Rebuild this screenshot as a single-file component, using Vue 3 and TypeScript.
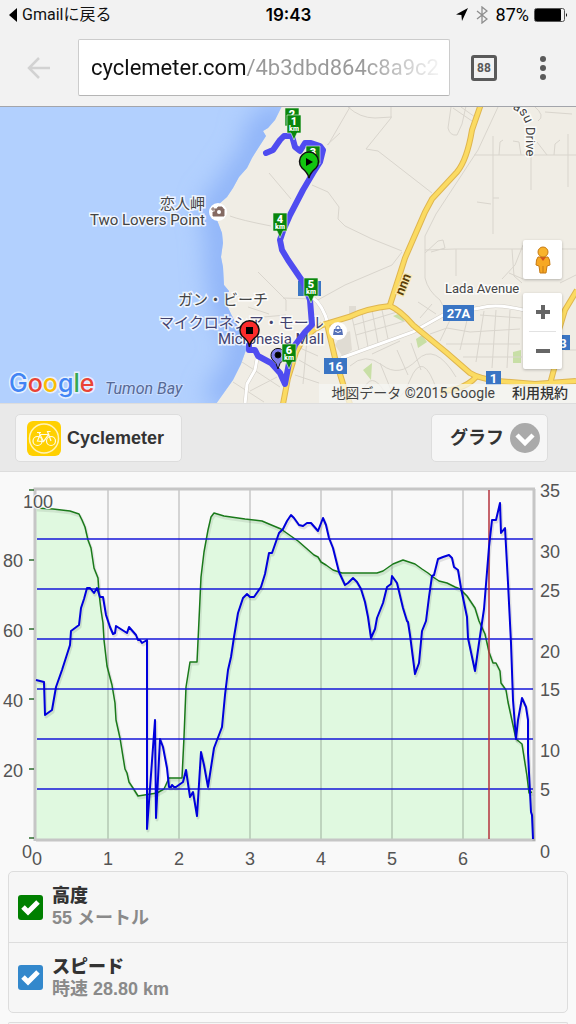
<script setup lang="ts">
import { ref } from 'vue'

interface Marker { n: string; x: number; y: number }
interface Shield { label: string; x: number; y: number; w: number; h: number }
interface Tick { label: string; at: number }
interface Series { id: string; name: string; value: string; color: string; on: boolean }

const url = ref('cyclemeter.com/4b3dbd864c8a9c2')
const view = ref('graph')

const backMarkers: Marker[] = [
  { n: '2', x: 292, y: 134 },
  { n: '1', x: 294, y: 141 },
  { n: '3', x: 313, y: 172 },
  { n: '4', x: 280, y: 239 },
  { n: '5', x: 311, y: 304 },
  { n: '6', x: 289, y: 370 },
]

const shields: Shield[] = [
  { label: '27A', x: 443, y: 305, w: 31, h: 16 },
  { label: '16', x: 324, y: 358, w: 23, h: 16 },
  { label: '1', x: 486, y: 371, w: 15, h: 14 },
  { label: '3', x: 556, y: 335, w: 14, h: 15 },
  { label: '', x: 298, y: 281, w: 23, h: 15 },
]

const greyRoads: string[] = [
  'M350 107 L328 145',
  'M327 145 L340 133 M348 107 Q360 118 375 118 L392 117',
  'M391 106 L391 118 L366 149 L378 151 L432 193',
  'M312 185 L328 192 L339 207 L338 219 L345 226 L372 239 L402 251',
  'M451 107 L448 128 Q450 136 457 135 L462 124 L466 106',
  'M453 108 L472 121 M461 107 L475 117',
  'M498 107 L478 150 L436 214 L425 236 L425 278 Q428 291 440 300 L444 308',
  'M474 155 L576 155 M493 136 L493 234 M531 155 L531 190 M568 134 L568 187',
  'M499 155 L500 142 L503 140 M513 141 L519 142 L521 155 M554 155 L555 144 L560 140 M537 142 L547 155',
  'M477 202 L491 204 M493 198 L499 198 M534 106 Q546 116 538 121 M545 112 L572 114',
  'M425 253 L438 241 L443 240 L445 248 L431 252 M425 250 L455 249 L576 249',
  'M456 249 L456 276 M512 249 L514 276 L522 283',
  'M269 173 L291 199 M230 216 Q240 220 271 226',
  'M316 301 L345 285 L392 265 L402 252',
  'M258 272 L286 300 L286 311 M283 298 L313 299',
  'M352 317 L359 350 M362 313 L368 347 M372 310 L378 343 M382 310 L388 339 M354 325 L397 312 M356 335 L405 321',
  'M420 318 L432 304 M418 302 L436 314 M430 334 L447 328 L470 332 L520 329',
  'M440 341 L450 320 M460 350 L468 316 M476 362 L484 311 M492 368 L496 310 M507 368 L510 310',
  'M446 344 L520 344 M463 357 L522 357 M480 315 L521 318',
  'M350 366 Q365 352 382 365 T417 360 T456 377 M363 391 Q371 370 384 391 T410 380 T437 391',
  'M380 363 L391 390 M397 350 L408 375 M411 343 L421 370 M372 354 L400 341',
  'M300 348 L318 356 M299 360 L320 372 M295 375 L319 383 M307 339 L303 384',
  'M233 382 L264 402 M242 362 L280 387 M250 391 L277 377 M248 307 L269 314 M252 318 L286 315',
  'M502 279 L515 265 L523 245 M509 273 L523 279 M560 283 L576 275 M565 350 L576 350',
]

const yellowRoads: string[] = [
  'M481 104 L472 130 Q467 160 457 172 L432 199 L425 212 L405 258 L390 305',
  'M390 306 Q368 308 349 317 L322 325 Q304 334 296 352 L288 378 L283 404',
  'M390 306 Q400 310 413 325 L447 353 L470 373 Q478 378 497 381 L535 384 L576 381',
  'M476 377 Q469 385 456 389 L440 392',
  'M327 324 L335 358 L344 387 L350 404',
  'M577 290 L565 310 L559 330 L557 358 L550 384',
]

const whiteRoads: string[] = [
  'M341 358 L413 332 L445 314 L480 308 Q498 303 528 311',
  'M312 297 Q323 305 328 324',
  'M257 359 L255 370 L247 384 L245 404',
]

const coast =
  'M282 106 L275 120 L268 128 L263 131 L266 136 L257 150 L252 158 L247 168 L239 177 L233 188 L227 197 L219 204 L217 220 L222 233 L223 243 L221 257 L223 267 L224 285 L229 291 L226 303 L231 314 L238 327 L246 335 L246 350 L241 364 L233 380 L216 404'

const route =
  'M266 153 L273 150 L280 140 L284 136 L292 136 L295 147 L300 151 L305 143 L311 143 L320 146 L323 150 L320 162 L313 173 L303 190 L290 215 L283 231 L280 240 L282 250 L288 260 L303 282 L310 300 L312 325 L305 332 L295 345 L289 363 L285 384 L280 373 L271 363 L258 356 L255 350 L249 350 L249 345'

const elevation =
  '36,508 53,509 70,511 79,514 82,520 85,527 88,540 91,548 94,568 98,578 99,593 101,610 103,623 104,640 107,666 112,685 115,703 116,720 120,738 125,769 127,773 129,782 133,788 138,796 157,793 164,789 169,778 182,778 184,737 186,687 190,662 197,662 199,620 201,577 204,552 208,530 211,517 214,513 224,516 245,519 262,521 269,524 281,529 288,534 298,541 314,555 318,557 321,562 326,565 333,570 342,573 377,573 383,571 393,564 403,560 415,564 422,569 428,573 433,577 439,581 447,583 455,587 460,589 467,596 475,608 479,621 485,634 489,652 493,663 496,663 500,671 501,683 506,690 508,702 516,739 522,744 527,776 529,793 532,792'

const speed =
  '36,680 44,682 45,715 52,710 56,687 62,670 70,645 71,631 79,625 81,608 84,599 87,588 90,588 94,593 97,588 100,597 103,597 106,615 110,627 113,634 115,633 116,626 127,633 129,627 136,635 138,640 140,640 142,643 147,640 147,829 155,720 156,818 160,739 163,747 167,768 169,787 171,787 172,785 174,787 176,787 183,782 186,770 190,797 193,792 197,816 201,752 204,765 208,787 214,748 222,727 225,695 228,670 231,657 234,637 238,613 243,598 247,594 250,597 254,597 261,587 265,574 269,553 272,553 279,533 283,529 287,521 291,515 294,518 299,525 303,526 307,523 311,523 318,531 323,518 326,525 329,538 333,548 339,572 345,585 348,583 353,578 357,582 361,589 365,602 368,617 371,638 375,629 377,618 383,603 387,587 391,584 392,576 397,583 403,608 407,621 408,622 410,635 415,674 419,663 422,631 426,621 429,597 432,576 434,575 438,559 443,557 449,555 452,558 454,567 458,570 461,588 467,617 468,638 475,671 479,643 484,609 489,547 492,520 496,520 500,503 501,533 505,528 508,583 511,643 513,700 516,739 518,720 522,698 526,707 528,720 528,753 531,812 532,815 533,839'

const verticals = [108, 179, 250, 321, 392, 463]
const speedLines = [539, 589, 639, 689, 739, 789]
const leftTicks = [490, 560, 629, 699, 769, 838]
const leftLabels: Tick[] = [
  { label: '80', at: 567 }, { label: '60', at: 637 }, { label: '40', at: 707 }, { label: '20', at: 777 },
]
const rightLabels: Tick[] = [
  { label: '35', at: 497 }, { label: '30', at: 558 }, { label: '25', at: 597 }, { label: '20', at: 658 },
  { label: '15', at: 696 }, { label: '10', at: 757 }, { label: '5', at: 796 }, { label: '0', at: 858 },
]
const bottomLabels: Tick[] = ['0', '1', '2', '3', '4', '5', '6'].map((label, i) => ({ label, at: 37 + i * 71 }))

const series = ref<Series[]>([
  { id: 'alt', name: '高度', value: '55 メートル', color: '#008000', on: true },
  { id: 'spd', name: 'スピード', value: '時速 28.80 km', color: '#3388cc', on: true },
])
</script>

<template>
  <div class="page">
    <header class="browser">
      <div class="status">
        <a class="return" href="#">
          <svg width="9" height="14" viewBox="0 0 9 14"><path d="M8 0 V14 L0 7Z" /></svg>
          Gmailに戻る
        </a>
        <span class="clock">19:43</span>
        <span class="indicators">
          <svg width="12" height="13" viewBox="0 0 12 13"><path d="M12 0 L6 13 L5.400 7 L0 6.500Z" /></svg>
          <svg class="bluetooth" width="12" height="18" viewBox="0 0 12 18">
            <path d="M1 5 L11 13 L6 17 V1 L11 5 L1 13" fill="none" stroke="#8e8e8e" stroke-width="1.300" />
          </svg>
          <span>87%</span>
          <svg width="34" height="14" viewBox="0 0 34 14">
            <rect x="0.500" y="0.500" width="30" height="13" rx="2" fill="none" stroke="#555" />
            <rect x="1" y="1" width="26" height="12" rx="1" />
            <path d="M32 5 Q34 7 32 9Z" />
          </svg>
        </span>
      </div>
      <div class="nav">
        <button class="back" type="button" aria-label="戻る">
          <svg width="24" height="24" viewBox="0 0 24 24">
            <path d="M23 12 H2 M12 2 L2 12 L12 22" fill="none" stroke="#d2d2d2" stroke-width="2.500" />
          </svg>
        </button>
        <div class="omnibox"><input v-model="url" type="text" aria-label="URL" spellcheck="false" /></div>
        <button class="tabs" type="button">88</button>
        <button class="more" type="button" aria-label="メニュー">
          <svg width="8" height="24" viewBox="0 0 8 24">
            <circle cx="4" cy="3" r="3" /><circle cx="4" cy="12" r="3" /><circle cx="4" cy="21" r="3" />
          </svg>
        </button>
      </div>
    </header>

    <section class="map">
      <svg class="canvas" viewBox="0 107 576 296" preserveAspectRatio="xMidYMid slice">
        <defs>
          <filter id="soft" filterUnits="userSpaceOnUse" x="0" y="60" width="576" height="400"><feGaussianBlur stdDeviation="12" /></filter>
          <clipPath id="sea"><path :d="coast + ' L0 404 L0 106Z'" /></clipPath>
        </defs>
        <rect y="100" width="576" height="310" fill="#f0ede5" />
        <path :d="coast + ' L0 404 L0 106Z'" fill="#b2d0fe" />
        <g clip-path="url(#sea)">
          <path :d="coast" fill="none" stroke="#8fb4f8" stroke-width="32" filter="url(#soft)" />
        </g>
        <path d="M341 335 L350 331 L352 350 L343 357 L335 345Z M349 306 H356 V314 H349Z" fill="#e0dcd3" />
        <path d="M393 316 L403 312 L404 322Z M416 339 L422 335 L427 342 L418 348Z M363 370 L372 363 L371 380Z M513 352 L521 350 V363 H513Z" fill="#c8dfa6" />
        <g fill="none" stroke="#d9d5cd" stroke-width="1">
          <path v-for="d in greyRoads" :key="d" :d="d" />
        </g>
        <g fill="none" stroke="#d1cdc5" stroke-width="4"><path v-for="d in whiteRoads" :key="d" :d="d" /></g>
        <g fill="none" stroke="#fff" stroke-width="3"><path v-for="d in whiteRoads" :key="d" :d="d" /></g>
        <g fill="none" stroke="#dfb650" stroke-width="6"><path v-for="d in yellowRoads" :key="d" :d="d" /></g>
        <g fill="none" stroke="#fbdb62" stroke-width="4"><path v-for="d in yellowRoads" :key="d" :d="d" /></g>

        <g v-for="s in shields" :key="s.label">
          <rect :x="s.x" :y="s.y" :width="s.w" :height="s.h" fill="#3a75c4" />
          <text v-if="s.label" class="shield" :x="s.x + s.w / 2" :y="s.y + s.h / 2 + 5">{{ s.label }}</text>
        </g>

        <circle cx="218" cy="212" r="9" fill="#fff" />
        <path d="M215 209 h2 l1 -2 h4 l1 2 h1 v7 h-11 v-4 h2z M211 209 h4 M213 207 v4" fill="#846a63" stroke="#846a63" stroke-width="1" />
        <circle cx="219" cy="212" r="2" fill="#fff" />
        <circle cx="338" cy="331" r="9" fill="#fff" />
        <path d="M334 329 h8 l1 6 h-10z" fill="#5470b8" />
        <path d="M336 329 v-1 a2 2 0 0 1 4 0 v1" fill="none" stroke="#5470b8" stroke-width="1" />
        <path d="M335 331 q3 3 6 0" fill="none" stroke="#fff" stroke-width="1" />

        <g class="place">
          <text x="205" y="209" text-anchor="end" font-size="15">恋人岬</text>
          <text x="205" y="225" text-anchor="end" font-size="15">Two Lovers Point</text>
          <text x="178" y="305" font-size="15">ガン・ビーチ</text>
          <text x="445" y="293" font-size="13">Lada Avenue</text>
          <path id="drive" d="M512 109 Q522 112 526 125 L526 170" fill="none" stroke="none" />
          <text font-size="13"><textPath href="#drive">asu Drive</textPath></text>
          <text transform="translate(403 296) rotate(-68)" class="hwy" font-size="13">nnn</text>
        </g>
        <g class="place mall">
          <text x="159" y="328" font-size="15">マイクロネシア・モール</text>
          <text x="218" y="344" font-size="15">Micronesia Mall</text>
        </g>
        <text class="bay" x="105" y="394">Tumon Bay</text>

        <path :d="route" fill="none" stroke="#4f4cf0" stroke-width="6" stroke-linejoin="round" stroke-linecap="round" />

        <g stroke="#111" stroke-width="1">
          <path d="M278 369 Q277 363 272 359 A7 7 0 1 1 284 359 Q279 363 278 369Z" fill="#7d7bea" />
          <circle cx="278" cy="355" r="3" fill="#000" />
        </g>
        <g v-for="m in backMarkers" :key="m.n" class="marker">
          <path :d="`M${m.x - 7} ${m.y - 26} h14 v18 h-4 l-3 7 l-3 -7 h-4z`" fill="#0a860c" stroke="#e9f2e4" stroke-opacity="0.600" stroke-width="1" />
          <text :x="m.x" :y="m.y - 16" font-size="11">{{ m.n }}</text>
          <text :x="m.x" :y="m.y - 10" font-size="7">km</text>
        </g>
        <g stroke="#111" stroke-width="1.500">
          <path d="M309 178 Q308 173 302 168 A9.500 9.500 0 1 1 316 168 Q310 173 309 178Z" fill="#12c50f" />
          <path d="M306 158 L313 162 L306 166Z" fill="#000" stroke="none" />
          <path d="M249.500 347 Q249 341 242 336 A9.500 9.500 0 1 1 257 336 Q250 341 249.500 347Z" fill="#fb2b2b" />
          <rect x="246" y="327" width="7" height="7" fill="#000" stroke="none" />
        </g>
        <text class="google" x="9" y="392">
          <tspan fill="#4285f4">G</tspan><tspan fill="#ea4335">o</tspan><tspan fill="#fbbc05">o</tspan><tspan fill="#4285f4">g</tspan><tspan fill="#34a853">l</tspan><tspan fill="#ea4335">e</tspan>
        </text>
      </svg>

      <div class="controls">
        <button class="pegman" type="button" aria-label="ストリートビュー">
          <svg width="16" height="28" viewBox="0 0 16 28">
            <path d="M3 11 Q1 13 1 19 L4 20 L5 27 H11 L12 20 L15 19 Q15 13 13 11Z" fill="#f7a823" stroke="#c77b15" stroke-width="1" />
            <path d="M5 11 L8 15 L11 11Z" fill="#d5521d" />
            <circle cx="8" cy="6" r="5" fill="#f9b32b" stroke="#c77b15" stroke-width="1" />
            <path d="M8 20 V27" stroke="#c77b15" stroke-width="1" />
          </svg>
        </button>
        <div class="zoom">
          <button type="button" aria-label="拡大"><svg width="14" height="14" viewBox="0 0 14 14"><path d="M0 7 H14 M7 0 V14" stroke="#666" stroke-width="4" /></svg></button>
          <button type="button" aria-label="縮小"><svg width="14" height="14" viewBox="0 0 14 14"><path d="M0 7 H14" stroke="#666" stroke-width="4" /></svg></button>
        </div>
      </div>
      <div class="credits"><span>地図データ ©2015 Google</span><a href="#">利用規約</a></div>
    </section>

    <div class="toolbar">
      <button class="brand" type="button">
        <svg width="34" height="35" viewBox="0 0 34 35">
          <rect width="34" height="35" rx="6" fill="#ffd000" />
          <circle cx="17" cy="17.500" r="14.500" fill="none" stroke="#fff3b8" stroke-width="1.500" />
          <g fill="none" stroke="#fffbe6" stroke-width="1.200">
            <circle cx="10.500" cy="20" r="4.500" /><circle cx="24" cy="20" r="4.500" />
            <path d="M10.500 20 L13 13.500 H21.500 L16.500 20.500Z M12 11.500 L16.500 20.500 M10 11.500 H14 M24 20 L20.500 10.500 H23.500" />
          </g>
        </svg>
        <span>Cyclemeter</span>
      </button>
      <div class="picker">
        <select v-model="view" aria-label="表示"><option value="graph">グラフ</option></select>
        <svg width="30" height="30" viewBox="0 0 30 30">
          <circle cx="15" cy="15" r="15" fill="#aaa" />
          <path d="M7 12 L15 20 L23 12" fill="none" stroke="#fff" stroke-width="4.500" />
        </svg>
      </div>
    </div>

    <svg class="chart" viewBox="0 472 576 399">
      <polygon :points="`36,839 ${elevation} 533,839`" fill="#e0f9e0" />
      <g stroke="#000" stroke-opacity="0.150" stroke-width="2">
        <line v-for="x in verticals" :key="x" :x1="x" :x2="x" y1="489" y2="839" />
      </g>
      <path d="M534 489 V840 H36" fill="none" stroke="#c6c6c6" stroke-width="3" />
      <path d="M35 841 V489 H535" fill="none" stroke="#c6c6c6" stroke-width="3" />
      <path v-for="y in leftTicks" :key="y" :d="`M29 ${y} H34`" stroke="#2c6b2c" stroke-width="1.500" />
      <g fill="none" stroke-linejoin="round">
        <polyline :points="elevation" stroke="#000" stroke-opacity="0.080" stroke-width="3" transform="translate(1 2)" />
        <polyline :points="elevation" stroke="#1a7a1a" stroke-width="1.500" />
        <path v-for="y in speedLines" :key="y" :d="`M37 ${y} H533`" stroke="#1414d8" stroke-width="1.500" />
        <path d="M489 490 V839" stroke="#b5323c" stroke-width="1.500" />
        <polyline :points="speed" stroke="#000" stroke-opacity="0.100" stroke-width="3" transform="translate(1 2)" />
        <polyline :points="speed" stroke="#0000dc" stroke-width="2" />
      </g>
      <text class="top" x="38" y="508" text-anchor="middle">100</text>
      <text v-for="t in leftLabels" :key="t.label" x="23" :y="t.at" text-anchor="end">{{ t.label }}</text>
      <text x="22" y="858">0</text>
      <text v-for="t in rightLabels" :key="t.label" x="540" :y="t.at">{{ t.label }}</text>
      <text v-for="t in bottomLabels" :key="t.label" :x="t.at" y="865" text-anchor="middle">{{ t.label }}</text>
    </svg>

    <div class="list">
      <label v-for="s in series" :key="s.id" class="row" :for="s.id">
        <span class="tick">
          <input :id="s.id" v-model="s.on" type="checkbox" :style="{ backgroundColor: s.color }" />
          <svg v-if="s.on" width="25" height="25" viewBox="0 0 25 25">
            <path d="M5 12 L10 17 L20 7" fill="none" stroke="#fff" stroke-width="5" />
          </svg>
        </span>
        <span class="info"><strong>{{ s.name }}</strong><span>{{ s.value }}</span></span>
      </label>
    </div>
    <div class="list next"></div>
  </div>
</template>

<style>
body {
  margin: 0;
  background: #f9f9f9;
}
</style>

<style scoped>
.page {
  font-family: "Liberation Sans", "Noto Sans CJK JP", sans-serif;
  color: #333;
  background: #f9f9f9;
}
button, input, select {
  font: inherit;
  color: inherit;
  margin: 0;
  padding: 0;
  border: 0;
  background: none;
}
svg { display: block; }

.browser {
  box-sizing: border-box;
  height: 107px;
  background: #f2f2f2;
  border-bottom: 1px solid #a3a5ab;
  font-family: Roboto, "Noto Sans CJK JP", sans-serif;
}
.status {
  display: grid;
  grid-template-columns: 1fr auto 1fr;
  align-items: center;
  height: 29px;
  padding: 0 8px 0 9px;
  font-size: 18px;
  line-height: 28px;
  color: #000;
}
.return {
  display: flex;
  align-items: center;
  gap: 4px;
  color: #111;
  text-decoration: none;
  font-size: 16px;
}
.clock { font-family: Inter, sans-serif; font-weight: 600; font-size: 17px; }
.indicators {
  display: flex;
  justify-content: flex-end;
  align-items: center;
  gap: 5px;
}
.bluetooth { margin: 0 3px; }
.nav {
  display: flex;
  align-items: center;
  padding: 10px 24px 0 27px;
}
.back { margin-right: 27px; }
.omnibox {
  flex: 1;
  min-width: 0;
  box-sizing: border-box;
  height: 57px;
  padding: 0 8px 0 12px;
  background: #fff;
  border: 1px solid #ccc;
  border-bottom-color: #b5b5b5;
  border-radius: 2px;
}
.omnibox input {
  display: block;
  width: 100%;
  height: 55px;
  font-size: 22px;
  color: transparent;
  background: linear-gradient(to right, #111 155px, #999 156px, #999 270px, #fff 358px);
  -webkit-background-clip: text;
  background-clip: text;
  outline: none;
}
.tabs {
  box-sizing: border-box;
  width: 26px;
  height: 26px;
  margin: 0 37px 0 21px;
  border: 3px solid #5a5a5a;
  border-radius: 3px;
  color: #5a5a5a;
  font-size: 12px;
  font-weight: 700;
  line-height: 20px;
}
.more { width: 18px; display: grid; justify-items: center; fill: #5a5a5a; }

.map {
  position: relative;
  font-family: Roboto, "Noto Sans CJK JP", sans-serif;
}
.canvas { width: 100%; height: auto; }
.place text {
  fill: #444;
  stroke: #fff;
  stroke-width: 3px;
  stroke-opacity: 0.8;
  paint-order: stroke;
}
.place.mall text { fill: #42426e; }
.place .hwy { fill: #5c4008; font-weight: 700; stroke: #fbe9a8; }
.bay {
  font-size: 16px;
  font-style: italic;
  fill: #566996;
  stroke: #c8dcfd;
  stroke-width: 2px;
  paint-order: stroke;
}
.shield { font-size: 13px; font-weight: 700; fill: #fff; text-anchor: middle; }
.marker text { font-weight: 900; fill: #fff; text-anchor: middle; }
.google {
  font-family: Inter, sans-serif;
  font-size: 25px;
  font-weight: 500;
  stroke: #fff;
  stroke-opacity: 0.7;
  stroke-width: 3px;
  paint-order: stroke;
}
.controls {
  position: absolute;
  right: 14px;
  bottom: 34px;
  display: flex;
  flex-direction: column;
  gap: 14px;
}
.pegman, .zoom {
  width: 39px;
  background: #fff;
  border-radius: 2px;
  box-shadow: 0 1px 3px rgba(0, 0, 0, 0.25);
}
.pegman { height: 39px; display: grid; place-items: center; }
.zoom { display: grid; }
.zoom button { height: 38px; display: grid; place-items: center; }
.zoom button + button { border-top: 1px solid #e2e2e2; margin: 0 6px; }
.credits {
  position: absolute;
  right: 0;
  bottom: 0;
  display: flex;
  gap: 17px;
  padding: 0 8px 0 12px;
  background: rgba(245, 245, 243, 0.75);
  font-size: 14px;
  line-height: 19px;
  color: #444;
}
.credits a { color: #333; text-decoration: none; font-weight: 500; }

.toolbar {
  display: flex;
  justify-content: space-between;
  padding: 10px 28px 9px 15px;
  background: #e9e9e9;
  border-top: 1px solid #ddd;
  border-bottom: 1px solid #ddd;
  font-size: 18px;
  font-weight: 700;
}
.brand, .picker {
  box-sizing: border-box;
  height: 48px;
  border: 1px solid #ddd;
  border-radius: 5px;
  background: #f6f6f6;
}
.brand {
  display: flex;
  align-items: center;
  gap: 6px;
  padding: 0 17px 0 11px;
}
.picker { display: grid; width: 117px; align-items: center; }
.picker > * { grid-area: 1 / 1; }
.picker select {
  appearance: none;
  width: 100%;
  height: 46px;
  padding-left: 18px;
  font-weight: 700;
}
.picker svg { justify-self: end; margin-right: 7px; pointer-events: none; }

.chart { width: 100%; height: auto; }
.chart text { font-size: 18px; fill: #545454; }
.chart .top { stroke: #f9f9f9; stroke-width: 2px; paint-order: stroke; }

.list {
  margin: 0 8px;
  border: 1px solid #ddd;
  border-radius: 5px;
  background: #f6f6f6;
}
.row {
  display: flex;
  align-items: center;
  gap: 9px;
  height: 70px;
  padding: 0 9px;
}
.row + .row { border-top: 1px solid #ddd; height: 69px; }
.tick { display: grid; }
.tick > * { grid-area: 1 / 1; }
.tick input {
  appearance: none;
  width: 25px;
  height: 25px;
  border-radius: 3px;
}
.tick svg { pointer-events: none; }
.info {
  display: flex;
  flex-direction: column;
  font-size: 18px;
  line-height: 22px;
  font-weight: 700;
  color: #8a8a8a;
}
.info strong { color: #333; }
.list.next {
  height: 1px;
  margin-top: 9px;
  border-bottom: 0;
  border-radius: 5px 5px 0 0;
}
</style>
